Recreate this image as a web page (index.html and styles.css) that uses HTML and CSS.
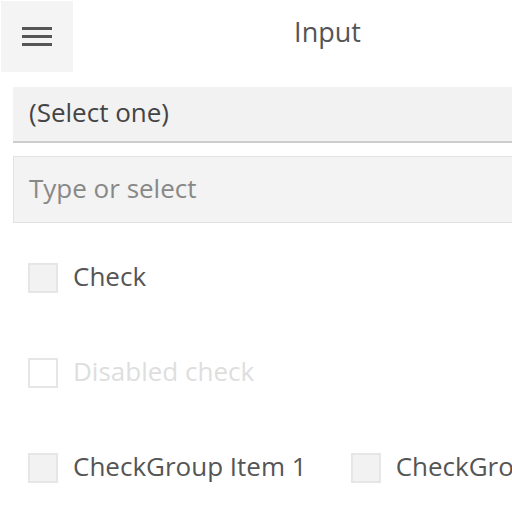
FILE: index.html
```html
<!DOCTYPE html>
<html>
<head>
<meta charset="utf-8">
<link rel="stylesheet" href="styles.css">
</head>
<body>
<div class="app">
  <header class="bar">
    <div class="menu-btn">
      <span class="line"></span>
      <span class="line"></span>
      <span class="line"></span>
    </div>
    <div class="title">Input</div>
    <div class="bar-spacer"></div>
  </header>
  <main class="content">
    <div class="select">(Select one)</div>
    <div class="combo">Type or select</div>
    <div class="row">
      <label class="check"><span class="box"></span><span class="label">Check</span></label>
    </div>
    <div class="row">
      <label class="check disabled"><span class="box"></span><span class="label">Disabled check</span></label>
    </div>
    <div class="row">
      <label class="check group-item"><span class="box"></span><span class="label">CheckGroup Item 1</span></label>
      <label class="check group-item"><span class="box"></span><span class="label">CheckGroup Item 2</span></label>
    </div>
  </main>
</div>
</body>
</html>
```
FILE: styles.css
```css
html, body {
  margin: 0;
  padding: 0;
  overflow: hidden;
  background: #fff;
}
.app {
  width: 655px;
  font-family: "Open Sans", "Liberation Sans", sans-serif;
  color: #555;
}
.bar {
  display: flex;
  height: 73px;
}
.menu-btn {
  margin: 1px 0 0 1px;
  width: 72px;
  height: 71px;
  background: #f4f4f4;
  display: flex;
  flex-direction: column;
  align-items: center;
  justify-content: center;
  gap: 5px;
}
.line {
  display: block;
  width: 30px;
  height: 3px;
  background: #555;
}
.title {
  flex: 1;
  text-align: center;
  font-size: 27px;
  line-height: 64px;
  color: #555;
}
.bar-spacer {
  width: 73px;
}
.content {
  padding: 0 0 0 13px;
}
.select {
  margin-top: 14px;
  height: 54px;
  background: #f2f2f2;
  border-bottom: 2px solid #cdcdcd;
  font-size: 26px;
  line-height: 50px;
  padding-left: 16px;
  color: #444;
}
.combo {
  margin-top: 13px;
  height: 65px;
  background: #f3f3f3;
  border: 1px solid #e2e2e2;
  font-size: 26px;
  line-height: 63px;
  padding-left: 15px;
  color: #888;
}
.row {
  height: 95px;
  display: flex;
  align-items: center;
  padding-left: 15px;
  white-space: nowrap;
}
.content .combo + .row {
  margin-top: 7px;
}
.check {
  display: flex;
  align-items: center;
  flex-shrink: 0;
  font-size: 26px;
}
.box {
  flex-shrink: 0;
  width: 26px;
  height: 26px;
  border: 2px solid #e6e6e6;
  background: #f2f2f2;
}
.label {
  margin-left: 15px;
  margin-bottom: 4px;
  color: #555;
}
.disabled .box {
  background: #fff;
}
.disabled .label {
  color: #dedede;
}
.group-item {
  margin-right: 44px;
}
```
